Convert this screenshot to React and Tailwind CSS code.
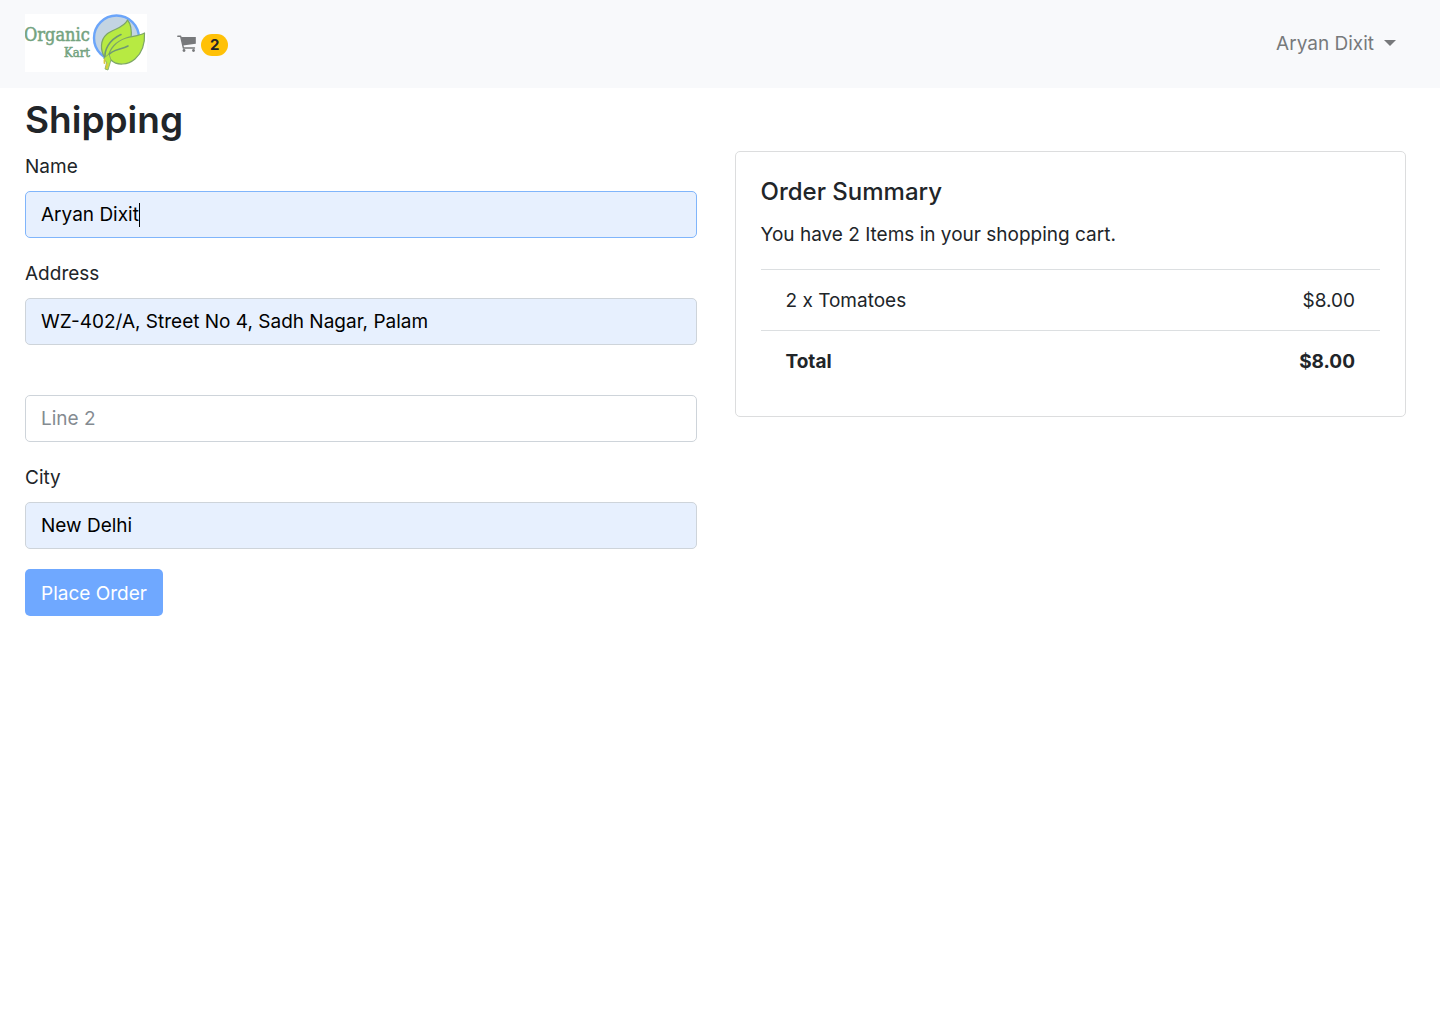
function Logo() {
  return (
    <svg viewBox="0 0 122 58" className="block h-[58px] w-[122px] shrink-0 bg-white" role="img" aria-label="Organic Kart">
      <g fill="#74a380" stroke="#74a380" strokeWidth="0.5" fontFamily="'DejaVu Serif Condensed', 'DejaVu Serif', serif">
        <text x="-1" y="27" fontSize="18">Organic</text>
        <text x="39" y="43" fontSize="13">Kart</text>
      </g>
      <circle cx="91.500" cy="24" r="22.500" fill="#c3d4e2" stroke="#6ba5fa" strokeWidth="2.4" />
      <g fill="#b7ea42" stroke="#7da567" strokeWidth="1.2" strokeLinejoin="round" strokeLinecap="round">
        <path d="M80 44C75 36 75 26 82 20C88 15 99 14 102.500 6C106 10 107 16 106 25L88 42Z" />
        <path d="M83 45C84 34 92 27 101 24C108 22 114 22 119.500 19C120 28 118 38 110 45C103 51 92 52 86 46Z" />
        <path d="M80 45C79 36 84 26 96 20.500M83 42C87 35 96 36 103 32" fill="none" stroke="#6f9873" strokeWidth="1.6" />
        <path d="M79 44L84 40L86 46L83 56L80 55L81.500 49Z" strokeWidth="0.8" />
        <path d="M79.500 46V49M82.500 50L81.500 54" stroke="#dcc93c" strokeWidth="1.8" />
      </g>
    </svg>
  );
}

function CartIcon() {
  return (
    <svg viewBox="0 0 20 18" className="h-[18px] w-5" aria-hidden="true">
      <path d="M0.800 1.200H3.600L6.400 13H17.500" fill="none" stroke="currentColor" strokeWidth="1.400" strokeLinecap="round" strokeLinejoin="round" />
      <path d="M4 2H18.800V8.800L5.800 10.500Z" fill="currentColor" />
      <circle cx="7" cy="15.500" r="1.400" fill="currentColor" />
      <circle cx="16.500" cy="15.500" r="1.400" fill="currentColor" />
    </svg>
  );
}

function TextBox(props) {
  return (
    <input
      type="text"
      className="block h-[47px] w-full rounded-[5px] border border-[#ced4da] bg-[#e7f0fe] px-[15px] text-black caret-transparent outline-none placeholder:text-[#848b91] placeholder-shown:bg-white focus:border-[#80b5fb]"
      {...props}
    />
  );
}

function Field({ id, label, children, ...props }) {
  return (
    <div className="mb-5">
      <label htmlFor={id} className="mb-[9px] block pt-px">{label}</label>
      <div className="relative">
        <TextBox id={id} {...props} />
        {children}
      </div>
    </div>
  );
}

export default function App() {
  return (
    <div className="min-h-screen bg-white font-[Inter,'Liberation_Sans',sans-serif] text-[19px] leading-[30px] text-[#212529]">
      <nav className="flex h-[88px] items-center bg-[#f8f9fb] pr-11 pl-[25px]">
        <a href="#home" className="mb-[3px]"><Logo /></a>
        <a href="#cart" aria-label="Shopping cart, 2 items" className="ml-[30px] flex items-center gap-1 text-[#77797b]">
          <CartIcon />
          <span className="mt-px flex h-[22px] items-center rounded-full bg-[#ffc107] px-[9px] text-[15px] font-bold text-[#212529]">2</span>
        </a>
        <button type="button" className="ml-auto flex items-center gap-2.5 text-[#77797b]">
          Aryan Dixit
          <svg viewBox="0 0 12 6" className="mb-[3px] h-1.5 w-3" aria-hidden="true"><path d="M0 0H12L6 6Z" fill="currentColor" /></svg>
        </button>
      </nav>

      <main className="pt-2 pr-[34px] pl-[25px]">
        <h1 className="mb-[7px] text-[37px] leading-[48px] font-semibold">Shipping</h1>
        <div className="grid grid-cols-2 items-start gap-[38px]">
          <form onSubmit={(event) => event.preventDefault()}>
            <Field id="name" label="Name" defaultValue="Aryan Dixit" autoFocus>
              <span className="absolute top-3 left-[114px] h-6 w-px bg-black" aria-hidden="true" />
            </Field>
            <Field id="address" label="Address" defaultValue="WZ-402/A, Street No 4, Sadh Nagar, Palam" />
            <div className="mt-[50px] mb-5">
              <TextBox aria-label="Address line 2" placeholder="Line 2" />
            </div>
            <Field id="city" label="City" defaultValue="New Delhi" />
            <button type="submit" className="h-[47px] rounded-[5px] bg-[#6fa8ff] px-4 pt-0.5 text-white">Place Order</button>
          </form>

          <section className="rounded-[5px] border border-[#dcddde] p-[25px]">
            <h2 className="mb-3 text-2xl leading-[30px] font-medium">Order Summary</h2>
            <p className="mb-[19px] pt-px">You have 2 Items in your shopping cart.</p>
            <ul>
              <li className="flex justify-between border-t border-[#dcdfe1] px-[25px] pt-4 pb-3.5">
                <span>2 x Tomatoes</span>
                <span>$8.00</span>
              </li>
              <li className="flex justify-between border-t border-[#dcdfe1] px-[25px] pt-4 pb-3.5 font-bold">
                <span>Total</span>
                <span>$8.00</span>
              </li>
            </ul>
          </section>
        </div>
      </main>
    </div>
  );
}
